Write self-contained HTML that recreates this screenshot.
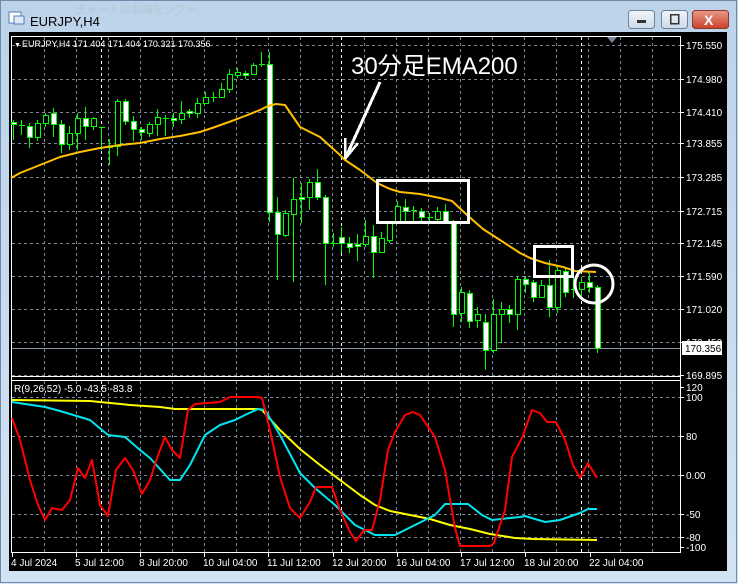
<!DOCTYPE html>
<html><head><meta charset="utf-8"><style>
html,body{margin:0;padding:0;width:738px;height:584px;overflow:hidden;background:#c9dcef;}
body{font-family:"Liberation Sans","Noto Sans CJK JP",sans-serif;}
line,rect{shape-rendering:crispEdges;}
</style></head><body>
<svg id="s" width="738" height="584" xmlns="http://www.w3.org/2000/svg" style="position:absolute;left:0;top:0">
<defs><linearGradient id="fr" x1="0" y1="0" x2="0" y2="1"><stop offset="0" stop-color="#bcd3ea"/><stop offset="1" stop-color="#d3e3f3"/></linearGradient>
<linearGradient id="rb" x1="0" y1="0" x2="0" y2="1"><stop offset="0" stop-color="#e89a88"/><stop offset="1" stop-color="#c9412a"/></linearGradient>
<linearGradient id="gb" x1="0" y1="0" x2="0" y2="1"><stop offset="0" stop-color="#f2f6fb"/><stop offset="1" stop-color="#cbd9e8"/></linearGradient></defs>
<rect x="0" y="0" width="738" height="584" fill="url(#fr)"/>
<rect x="0.5" y="0.5" width="736" height="582" fill="none" stroke="#6f8aa8"/>
<text x="76" y="13" font-size="11" fill="#b7c6d6">チャートの右端をシフト</text>
<rect x="9" y="12" width="12" height="11" fill="#fff" stroke="#4f7fb8"/>
<rect x="14" y="16" width="10" height="8" fill="#dfeaf6" stroke="#4f7fb8"/>
<text x="30" y="26" font-size="13" fill="#000">EURJPY,H4</text>
<rect x="628.5" y="10.5" width="26" height="18" rx="3" fill="url(#gb)" stroke="#6d829b"/>
<rect x="637" y="20" width="9" height="3" fill="#333"/>
<rect x="661.5" y="10.5" width="26" height="18" rx="3" fill="url(#gb)" stroke="#6d829b"/>
<rect x="670.5" y="14.5" width="8" height="9" fill="none" stroke="#333" stroke-width="1.5"/>
<rect x="692.5" y="10.5" width="36" height="18" rx="3" fill="url(#rb)" stroke="#8a3a2c"/>
<text x="704" y="25" font-size="14" font-weight="bold" fill="#fff">X</text>
<rect x="9" y="32" width="718" height="539" fill="#000"/>
<g id="g"></g>
</svg>
<script>
var g=document.getElementById('g'),h='';
function L(x1,y1,x2,y2,c,w,d){h+='<line x1="'+x1+'" y1="'+y1+'" x2="'+x2+'" y2="'+y2+'" stroke="'+c+'" stroke-width="'+(w||1)+'"'+(d?' stroke-dasharray="'+d+'"':'')+'/>';}
function T(x,y,t,s,c,a){h+='<text x="'+x+'" y="'+y+'" font-size="'+s+'" fill="'+c+'"'+(a||'')+'>'+t+'</text>';}
function P(pts,c,w){h+='<polyline fill="none" stroke="'+c+'" stroke-width="'+w+'" stroke-linejoin="round" points="'+pts.map(function(p){return p.join(',')}).join(' ')+'"/>';}
for(var x=44.5;x<680;x+=32){L(x,37,x,376,'#7c8797',1,'3,3');L(x,381,x,552,'#7c8797',1,'3,3');}
[101.5,341.5,581.5].forEach(function(x){L(x,37,x,376,'#fff',1,'3,3');L(x,381,x,552,'#fff',1,'3,3');});
var prices=[['175.550',45],['174.980',79],['174.410',112],['173.855',143],['173.285',177],['172.715',211],['172.145',243],['171.590',276],['171.020',309],['170.450',342],['169.895',375]];
prices.forEach(function(p){L(12,p[1]+.5,680,p[1]+.5,'#7c8797',1,'3,3');L(680,p[1]+.5,684,p[1]+.5,'#fff');T(686,p[1]+4,p[0],10,'#fff');});
var ind=[['120',387],['100',397],['80',436],['0.00',475],['-50',514],['-80',537],['-100',547]];
ind.forEach(function(p){if(p[0]!='120'&&p[0]!='-100')L(12,p[1]+.5,680,p[1]+.5,'#7c8797',1,'3,3');L(680,p[1]+.5,684,p[1]+.5,'#fff');T(686,p[1]+4,p[0],10,'#fff');});
L(11.5,36,11.5,553,'#fff');L(680.5,36,680.5,553,'#fff');L(11,36.5,681,36.5,'#fff');
L(11,376.5,681,376.5,'#fff');L(11,380.5,681,380.5,'#fff');L(11,552.5,681,552.5,'#fff');
h+='<polygon points="607,37 617,37 612,43" fill="#7c8797"/>';
var tl=[[12,'4 Jul 2024'],[76,'5 Jul 12:00'],[140,'8 Jul 20:00'],[204,'10 Jul 04:00'],[268,'11 Jul 12:00'],[333,'12 Jul 20:00'],[397,'16 Jul 04:00'],[461,'17 Jul 12:00'],[525,'18 Jul 20:00'],[590,'22 Jul 04:00']];
tl.forEach(function(t){L(t[0]+.5,553,t[0]+.5,557,'#fff');T(t[0]-1,566,t[1],10,'#fff');});
L(12,348.5,680,348.5,'#8a95a3');
var C=[['s',122,124,120,140],['d',125,125,120,135],['s',126,137,123,148],['b',123,137,120,141],['b',115,123,113,127],['s',113,124,108,137],['s',124,144,120,153],['b',133,144,126,150],['b',118,133,113,150],['s',118,126,107,140],['b',118,126,117,130],['d',127,127,127,150],['d',147,147,139,165],['b',101,146,99,156],['s',101,121,99,125],['s',121,129,116,141],['s',129,132,127,140],['b',124,133,122,137],['b',117,124,109,136],['d',118,118,115,136],['s',118,120,113,127],['b',113,119,101,124],['s',111,113,109,118],['b',103,113,98,118],['b',97,103,92,103],['d',97,97,92,102],['b',89,97,83,97],['b',74,89,69,93],['b',72,75,68,78],['s',73,75,71,79],['b',65,74,63,75],['d',64,64,52,67],['s',64,212,52,222],['s',212,234,197,280],['b',213,235,210,237],['b',199,214,178,282],['s',197,199,183,223],['b',182,197,179,210],['s',182,197,169,200],['s',197,243,195,285],['d',243,243,233,247],['s',237,243,227,253],['s',243,247,237,253],['s',244,246,234,261],['b',236,244,220,247],['s',236,252,225,278],['b',238,252,232,253],['b',223,240,222,243],['b',206,223,201,223],['s',207,211,199,223],['d',210,210,206,223],['s',211,217,208,223],['d',217,217,213,223],['b',211,219,207,223],['s',211,223,204,223],['s',223,314,220,327],['b',292,313,287,322],['s',293,321,290,328],['b',314,320,307,328],['s',322,350,314,370],['b',314,350,299,353],['b',309,314,302,343],['s',309,314,305,323],['b',279,314,277,330],['s',279,284,276,293],['s',282,297,280,302],['b',285,297,280,298],['s',285,307,260,317],['b',270,307,267,313],['s',271,292,267,297],['d',289,289,277,298],['b',282,289,277,297],['s',282,287,273,293],['s',287,348,285,353]];
C.forEach(function(c,i){var x=13+8*i;L(x+.5,c[3],x+.5,c[4],'#00ff00');
 if(c[0]=='d'){L(x-2,c[1]+.5,x+4,c[1]+.5,'#00ff00');}
 else{h+='<rect x="'+(x-2+.5)+'" y="'+(c[1]+.5)+'" width="5" height="'+Math.max(1,c[2]-c[1])+'" fill="'+(c[0]=='s'?'#fff':'#000')+'" stroke="#00ff00"/>';}});
P([[11,178],[20,173],[30,169],[45,163],[60,157],[80,152],[100,148],[120,145],[140,143],[160,139],[180,136],[200,132],[215,127],[229,122],[245,116],[260,110],[268,106],[276,104],[285,105],[300,127],[320,137],[340,155],[345,160],[360,170],[377,183],[390,189],[400,192],[420,194],[440,198],[452,201],[467,215],[483,229],[500,240],[520,253],[530,258],[545,263],[563,267],[575,271],[596,272]],'#ffc000',2);
h+='<text x="351" y="74" font-size="24" fill="#fff">30分足EMA200</text>';
L(380,82,345,159,'#fff',3);L(345,159,345,138,'#fff',2.5);L(345,159,358,143,'#fff',2.5);
h+='<rect x="377.5" y="180.5" width="91" height="42" fill="none" stroke="#fff" stroke-width="3"/>';
h+='<rect x="534.5" y="246.5" width="38" height="30" fill="none" stroke="#fff" stroke-width="3"/>';
h+='<circle cx="594" cy="284" r="19" fill="none" stroke="#fff" stroke-width="3"/>';
h+='<rect x="682" y="341" width="40" height="14" fill="#fff"/>';T(685,352,'170.356',10,'#000');
T(14,47,'▼',7,'#fff');T(22,47,'EURJPY,H4  171.404 171.404 170.321 170.356',9,'#fff');
T(14,392,'R(9,26,52) -5.0 -43.5 -83.8',10,'#fff');
P([[12,400],[90,401],[100,402],[130,405],[160,407],[175,409],[200,409],[258,409],[262,410],[280,430],[300,449],[320,465],[340,480],[360,495],[375,505],[390,511],[410,515],[430,519],[450,525],[470,529],[490,534],[515,538],[533,539],[597,540]],'#ffff00',2);
P([[12,402],[45,407],[60,411],[70,414],[90,420],[108,435],[125,437],[140,450],[150,458],[170,480],[180,480],[190,465],[205,435],[220,425],[235,420],[245,415],[258,409],[265,410],[280,435],[300,473],[315,488],[335,505],[355,525],[375,535],[395,535],[415,525],[435,515],[445,504],[468,504],[482,515],[492,520],[520,517],[525,516],[545,522],[560,520],[580,513],[588,509],[597,509]],'#00e5ee',2);
P([[12,418],[20,440],[30,480],[38,505],[45,520],[52,508],[62,510],[70,500],[78,468],[85,478],[92,460],[100,505],[108,516],[116,470],[125,458],[133,470],[142,494],[150,480],[157,458],[165,437],[172,450],[180,458],[188,410],[195,404],[220,402],[230,397],[258,397],[262,398],[270,430],[280,477],[290,508],[300,518],[310,502],[316,487],[332,487],[340,510],[350,532],[356,541],[364,530],[372,530],[380,500],[388,450],[395,432],[405,415],[413,412],[420,415],[435,437],[445,470],[455,528],[460,546],[490,546],[494,543],[505,510],[512,457],[522,438],[532,410],[540,413],[547,422],[556,422],[565,440],[573,465],[580,478],[588,463],[597,478]],'#ff0000',2);
g.innerHTML=h;
</script>
</body></html>
